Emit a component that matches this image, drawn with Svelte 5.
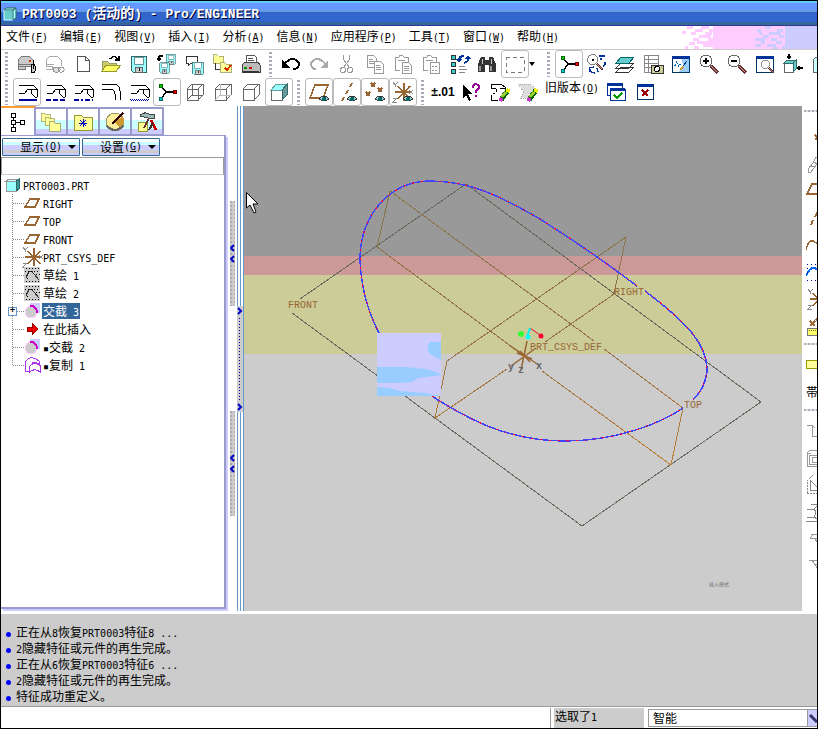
<script lang="ts">
  const menus = [
    ['文件', 'F'], ['编辑', 'E'], ['视图', 'V'], ['插入', 'I'], ['分析', 'A'],
    ['信息', 'N'], ['应用程序', 'P'], ['工具', 'T'], ['窗口', 'W'], ['帮助', 'H'],
  ]

  const edge = '<path d="M4 5H15M4 13H10L13 9H22M15 5Q19 5 22 9V17M16 9V13L20 17H22" fill="none" stroke="#000"/>'
  const cube = '<path d="M4 9H15V20H4ZM4 9L9 4H20V15L15 20M15 9L20 4" fill="none" stroke="#666"/>'
  const eye = '<path d="M12 19Q17 13 22 19Q17 23 12 19Z" fill="#9cc" stroke="#333"/><circle cx="17" cy="19" r="2" fill="#066"/>'
  const disk = '<path d="M4 4H19V20H6L4 18Z" fill="#9ff" stroke="#366"/><path d="M7 5H16V12H7Z" fill="#fff" stroke="#699"/><path d="M8 15H15V20H8Z" fill="#ccc" stroke="#666"/><path d="M12 16V19" stroke="#000"/>'
  const nodes = '<path d="M6 6L11 12L6 19M11 12H20" fill="none" stroke="#000" stroke-width="1.500"/><circle cx="6" cy="6" r="2" fill="#0c0" stroke="#060"/><circle cx="6" cy="19" r="2" fill="#0cc" stroke="#066"/><circle cx="20" cy="12" r="2" fill="#e00" stroke="#600"/>'
  const lens = '<circle cx="9" cy="9" r="6" fill="#fff" stroke="#666"/><path d="M14 14L21 21" stroke="#633" stroke-width="3"/><path d="M14 14L20 20" stroke="#c99"/>'
  const win = '<rect x="3" y="4" width="17" height="16" fill="#fff" stroke="#036"/><path d="M3 5H21" stroke="#039" stroke-width="3"/>'
  const plane = '<path d="M8 5H21L16 18H3Z" fill="none" stroke="#963" stroke-width="1.500"/>'
  const axis = '<path d="M17 3L15 7M13 10L11 14M9 17L7 21" fill="none" stroke="#963" stroke-width="2"/>'
  const csys = '<path d="M7 6L19 19M7 19L19 6M4 12H20M13 3V21" fill="none" stroke="#963" stroke-width="1.500"/><path d="M2 2L4 5L7 2M4 5V7M2 18H6L2 22H6M18 10L22 14M22 10L18 14" fill="none" stroke="#888"/>'
  const paste = '<path d="M4 5H8Q10 1 13 5H17V10M9 18H4V5M7 8H14" fill="none" stroke="#999"/>'
  const folder = '<path d="M3 6H8L10 8H17V18H3Z" fill="#ff9" stroke="#996"/>'
  const pencil = '<path d="M14 20L21 10" stroke="#060" stroke-width="5"/><path d="M15 17L19 12" stroke="#9c3" stroke-width="3"/><path d="M20 12L22 9" stroke="#ee0" stroke-width="4"/><path d="M13 21L15 18" stroke="#c3c" stroke-width="4"/>'

  const icons: Record<string, string> = {
    find: '<path d="M3 14V8L7 4H14L18 8V14ZM3 12H18M10 14V17H3V14" fill="#ccc" stroke="#777"/><circle cx="15" cy="9" r="1.5" fill="#c30"/><rect x="16" y="12" width="4" height="9" rx="2" fill="#ccc" stroke="#000"/><path d="M18 8V17" stroke="#000"/>',
    link: '<path d="M3 14V8L7 4H14L18 8V14M3 14H10M3 12H11M3 17H9V14" fill="none" stroke="#aaa"/><rect x="10" y="15" width="7" height="5" rx="2" fill="#ddd" stroke="#999"/><rect x="15" y="15" width="6" height="5" rx="2" fill="none" stroke="#999"/>',
    new: '<path d="M6 4H14L18 8V19H6ZM14 4V8H18" fill="#fff" stroke="#555"/>',
    open: '<path d="M3 9H8L10 11H17V19H3Z" fill="#cc6" stroke="#996"/><path d="M3 19L7 13H22L17 19Z" fill="#ff6" stroke="#993"/><path d="M11 7Q15 2 19 7M20 4V8H16" fill="none" stroke="#000" stroke-width="1.500"/>',
    save: disk,
    saveas: `<g transform="translate(9 0) scale(.6)">${disk}</g><g transform="translate(2 8) scale(.65)">${disk}</g><path d="M2 7H6M4 4V9M4 4H8" fill="none" stroke="#000" stroke-width="1.500"/>`,
    backup: `<path d="M3 4H14V11H8L5 14V11H3Z" fill="#fff" stroke="#333"/><g transform="translate(6 7) scale(.75)">${disk}</g>`,
    workdir: `<g transform="translate(0 -2) scale(.75)">${folder}</g><path d="M4 11V17H9" fill="none" stroke="#333"/><g transform="translate(7 6) scale(.8)">${folder}</g><path d="M14 16L16 18L20 13" fill="none" stroke="#c30" stroke-width="2"/>`,
    print: '<path d="M7 11V3H15L17 5V11M9 6H14M9 8H15" fill="#fff" stroke="#555"/><path d="M3 13L6 10H19L21 13V20H3Z" fill="#bbb" stroke="#444"/><path d="M5 16H8" stroke="#090" stroke-width="2"/><path d="M10 16H13" stroke="#c00" stroke-width="2"/><path d="M4 20H20" stroke="#333" stroke-width="2"/>',
    undo: '<path d="M5 13Q9 7 14 7Q20 8 20 13Q19 17 14 17" fill="none" stroke="#000" stroke-width="2"/><path d="M3 8V16H11Z" fill="#000"/>',
    redo: '<path d="M19 13Q15 7 10 7Q4 8 4 13Q5 17 9 17" fill="none" stroke="#aaa" stroke-width="2"/><path d="M21 8V16H13Z" fill="#aaa"/>',
    cut: '<path d="M8 3L9 8L14 15M15 3L14 8L9 15" fill="none" stroke="#999"/><circle cx="8" cy="18" r="2.500" fill="none" stroke="#999"/><circle cx="15" cy="18" r="2.500" fill="none" stroke="#999"/>',
    copy: '<path d="M4 3H10L13 6V15H4ZM6 7H10M6 9H11M6 11H11" fill="#fff" stroke="#999"/><path d="M11 9H17L20 12V21H11ZM13 13H17M13 15H18M13 17H18" fill="#fff" stroke="#999"/>',
    paste: `${paste}<path d="M11 10H17L20 13V21H11ZM13 14H18M13 16H18M13 18H18" fill="#fff" stroke="#999"/>`,
    pastex: `${paste}<path d="M11 10H20V21H11ZM13 14H15M16 14H18M13 18H15M16 18H18" fill="#fff" stroke="#999"/>`,
    regen: '<path d="M4 3H8V7H4ZM4 10H8V14H4ZM4 17H8V21H4Z" fill="#3cc" stroke="#333"/><path d="M12 14H18M12 17H20M12 20H18" stroke="#888"/><path d="M12 9Q12 4 17 4M21 5Q22 10 17 11" fill="none" stroke="#039" stroke-width="2"/><path d="M9 7H15L12 11ZM18 7L21 3L24 7Z" fill="#039"/>',
    search: '<path d="M6 5H10V8H14V5H18L21 12V20H14V13H10V20H3V12Z" fill="#333"/><path d="M7 7V12M16 7V12" stroke="#ccc"/><path d="M5 14V19M16 14V19" stroke="#999" stroke-width="2"/>',
    select: '<path d="M3 5H21V20H3Z" fill="none" stroke="#777" stroke-dasharray="4 3"/>',
    nodes,
    spin: `<g transform="translate(0 0) scale(.85)">${lens}</g><circle cx="8" cy="8" r="1.500" fill="#000"/><path d="M14 4H20M15 7H17M20 10Q21 13 18 14M5 17V19Q7 21 10 21M4 16L9 15M12 16L13 20" fill="none" stroke="#039" stroke-width="1.500"/>`,
    layers: '<path d="M3 20L8 15H21L16 20ZM3 16L8 11H21L16 16Z" fill="#fff" stroke="#333"/><path d="M3 11L8 5H21L16 11Z" fill="#6cc" stroke="#066"/>',
    views: '<path d="M3 3H17V20H3ZM3 7H17M3 11H17M3 15H17M7 3V20" fill="#fff" stroke="#888"/><rect x="10" y="13" width="12" height="8" fill="#cc9" stroke="#333"/><circle cx="16" cy="17" r="2.500" fill="#fff" stroke="#000"/>',
    repaint: `${win}<path d="M13 7H20V20H10L14 14Z" fill="#9cf"/><path d="M7 10L9 11M9 14L12 12M6 13L7 14" stroke="#06c" stroke-width="1.500" stroke-dasharray="1 1"/><path d="M18 9L14 14" stroke="#036"/><path d="M14 15L11 18" stroke="#c93" stroke-width="2"/>`,
    zoomin: `${lens}<path d="M6 9H12M9 6V12" stroke="#000" stroke-width="2"/>`,
    zoomout: `${lens}<path d="M6 9H12" stroke="#000" stroke-width="2"/>`,
    refit: `${win}<g transform="translate(6 6) scale(.7)">${lens}</g>`,
    orient: '<path d="M3 11H12V20H3Z" fill="#fff" stroke="#666"/><path d="M3 11L6 8H15L12 11ZM12 11L15 8V17L12 20Z" fill="#6cc" stroke="#366"/><path d="M8 2V7M6 5H10M22 16H16M18 14V18" stroke="#000" stroke-width="1.500"/>',
    saved: '<path d="M4 8L7 5H20V20H4Z" fill="#cff" stroke="#666"/>',
    edge1: `${edge}<path d="M4 20H22" stroke="#009" stroke-width="2"/>`,
    edge2: `${edge}<path d="M3 20H22" stroke="#009" stroke-width="2" stroke-dasharray="5 2"/>`,
    edge3: `${edge}<path d="M3 20H22" stroke="#009" stroke-width="2" stroke-dasharray="5 2 2 2"/>`,
    edge4: '<path d="M3 4H15Q21 5 21 11V20M3 9H12Q16 10 16 14V20" fill="none" stroke="#000"/>',
    edge5: `${edge}<path d="M3 19H22M4 20H22" stroke="#009" stroke-dasharray="1 1"/>`,
    wire: `${cube}<path d="M9 4V15H20M9 15L4 20" fill="none" stroke="#666"/>`,
    hidden: `${cube}<path d="M9 4V15H20M9 15L4 20" fill="none" stroke="#bbb"/>`,
    nohidden: cube,
    shaded: '<path d="M4 10H15V20H4Z" fill="#fff" stroke="#666"/><path d="M4 10L9 4H20L15 10Z" fill="#9ff" stroke="#699"/><path d="M15 10L20 4V15L15 20Z" fill="#699" stroke="#366"/>',
    planes: plane + eye,
    axes: axis + eye,
    points: `<path d="M8 3L12 7M12 3L8 7M3 12L7 16M7 12L3 16M15 8L19 12M19 8L15 12" stroke="#963" stroke-width="1.500"/>${eye}`,
    csyss: csys + eye,
    csystem: csys,
    help: '<path d="M4 5V18L7 15L10 21L12 20L9 14H13Z" fill="#000"/><path d="M14 8Q14 4 17 4Q21 5 20 8L17 11V13M17 15V17" fill="none" stroke="#909" stroke-width="2"/>',
    sketch: `<path d="M4 4H14L19 8M4 4V8L9 9V12M19 8H13M4 15V20H11M8 14L6 13" fill="#fff" stroke="#000"/>${pencil}`,
    fade: `<path d="M3 4H16L20 9L15 18H6L9 12Z" fill="#ddd" stroke="#aaa" stroke-dasharray="1 1"/>${pencil}`,
    accept: '<path d="M2 3H17V15H2Z" fill="#fff" stroke="#039"/><path d="M2 4H17" stroke="#039" stroke-width="3"/><path d="M5 9H20V20H5Z" fill="#fff" stroke="#039"/><path d="M5 9H20" stroke="#039" stroke-width="3"/><path d="M9 15L12 18L17 13" fill="none" stroke="#090" stroke-width="2"/>',
    close: '<path d="M4 4H20V19H4Z" fill="#fff" stroke="#036"/><path d="M4 5H20" stroke="#039" stroke-width="3"/><path d="M9 10L15 16M15 10L9 16" stroke="#900" stroke-width="2"/>',
    // model tree tabs
    tree: '<path d="M5 3H9V7H5ZM5 10H9V14H5ZM5 17H9V21H5ZM14 10H18V14H14ZM7 7V10M7 14V17M9 12H14" fill="#fff" stroke="#000"/>',
    folders: `<g transform="translate(0 -1) scale(.7)">${folder}</g><g transform="translate(4 3) scale(.7)">${folder}</g><g transform="translate(8 7) scale(.8)">${folder}</g>`,
    favorites: '<path d="M3 5H10L12 7H21V20H3Z" fill="#ff9" stroke="#993"/><path d="M12 9V17M8 13H16M9 10L15 16M15 10L9 16" stroke="#00c"/>',
    history: '<circle cx="12" cy="12" r="9" fill="#fe9" stroke="#996"/><path d="M12 12L20 6Q23 12 18 19Z" fill="#c93"/><path d="M9 14L20 3" stroke="#300" stroke-width="2"/><path d="M4 16Q12 24 20 16" fill="none" stroke="#666" stroke-width="2"/>',
    tools: '<path d="M3 12H12V21H3Z" fill="#ff9" stroke="#993"/><path d="M5 6Q8 1 14 4H19V8H13L9 7Z" fill="#9bb" stroke="#444"/><path d="M14 8L9 18" stroke="#633" stroke-width="2"/><path d="M16 10L21 20" stroke="#c00" stroke-width="3"/><path d="M14 20L18 13" stroke="#333" stroke-width="2"/>',
    // feature palette, cut by the window edge
    dpoint: '<path d="M9 10L14 15M14 10L9 15" stroke="#963" stroke-width="2"/>',
    chain: '<path d="M2 17L8 10L11 12L5 20L2 20ZM7 11L10 5L13 5V11M5 14L9 15" fill="none" stroke="#999"/>',
    dplane: '<path d="M6 5H20L15 15H1Z" fill="none" stroke="#963" stroke-width="1.500"/>',
    daxis: '<path d="M12 5L9 11M7 14L5 19" stroke="#963" stroke-width="2"/>',
    curve: '<path d="M0 17Q2 7 7 8Q11 10 14 13" fill="none" stroke="#963" stroke-width="1.500"/>',
    dsketch: '<path d="M0 16Q3 8 8 8Q12 9 14 12" fill="none" stroke="#06f" stroke-width="2"/><path d="M1 4H20M1 8H3M1 12H3M1 20H20" stroke="#009" stroke-dasharray="1 3"/>',
    field: '<path d="M4 7L9 12M9 7L4 12M10 5L12 7" stroke="#963" stroke-width="2"/><path d="M1 14H20V21H1Z" fill="#ff6" stroke="#777"/><path d="M3 16H12" stroke="#663" stroke-dasharray="1 1"/>',
    rect: '<path d="M0 7H20V15H0Z" fill="#ff9" stroke="#990"/>',
    hole: '<path d="M1 6H6V17H14M6 6L9 9" fill="none" stroke="#999"/>',
    shell: '<path d="M1 7L4 4H20M1 7V20H20M1 7H5M3 9H20M3 9V18H20M6 11V16H20M6 11H14" fill="none" stroke="#999"/>',
    rib: '<path d="M1 20V8L7 2M1 20H20" fill="none" stroke="#888" stroke-dasharray="2 1"/><path d="M4 7V17H14Z" fill="none" stroke="#888"/>',
    draft: '<path d="M5 4H20M1 9H8Q11 12 8 17H1M8 9L12 5M8 17L12 20M0 21H20" fill="none" stroke="#888"/>',
    round: '<path d="M5 7H14M4 11L8 7M4 11L14 12M9 12L12 16" fill="none" stroke="#999"/>',
    chamfer: '<path d="M3 6H14M6 6L12 15M9 10H14" fill="none" stroke="#999"/>',
    // tree items
    part: '<path d="M5 8H15V18H5Z" fill="#9ff" stroke="#999"/><path d="M5 8L8 6H18L15 8Z" fill="#cff" stroke="#999"/><path d="M15 8L18 6V16L15 18Z" fill="#399" stroke="#366"/>',
    datum: '<path d="M9 8H18L14 16H4Z" fill="none" stroke="#963" stroke-width="1.500"/>',
    sk: '<rect x="3" y="4" width="16" height="16" fill="#ccc"/><path d="M5 15Q9 4 13 11L18 17" fill="none" stroke="#333"/><path d="M5 5H19M5 18H19M4 8H19M5 12H8M15 11H19M6 15H8" stroke="#000" stroke-dasharray="1 2"/>',
    trim: '<rect x="9" y="4" width="10" height="10" fill="#ccf"/><circle cx="10" cy="13" r="6" fill="#ccc" stroke="#fcf"/><path d="M9 7Q16 7 16 14" fill="none" stroke="#c0c" stroke-width="2"/>',
    insert: '<path d="M6 10H11V6L17 12L11 18V14H6Z" fill="#e00" stroke="#900"/>',
    dup: '<path d="M4 18V9Q10 1 18 8V12Q12 8 8 14V20Q13 14 19 19V12Q15 8 11 10M4 18H8" fill="none" stroke="#a3e"/>',
  }

  const row1 = [
    ['find', 'link', 'new', 'open', 'save', 'saveas', 'backup', 'workdir', 'print'],
    ['undo', 'redo', 'cut', 'copy', 'paste', 'pastex', 'regen', 'search', 'select'],
    ['nodes', 'spin', 'layers', 'views', 'repaint', 'zoomin', 'zoomout', 'refit', 'orient', 'saved'],
  ]
  const row2 = [
    ['edge1', 'edge2', 'edge3', 'edge4', 'edge5', 'nodes', 'wire', 'hidden', 'nohidden', 'shaded'],
    ['planes', 'axes', 'points', 'csyss'],
  ]
  const pressed = ['edge1', 'nodes', 'shaded', 'planes', 'axes', 'points', 'csyss', 'select']

  const palette = [
    ['dpoint', 'chain', 'dplane', 'daxis', 'curve', 'dsketch', 'csystem', 'field'],
    ['rect', 'band'],
    ['hole', 'shell', 'rib', 'draft', 'round', 'chamfer'],
  ]

  const features = [
    { icon: 'datum', name: 'RIGHT' },
    { icon: 'datum', name: 'TOP' },
    { icon: 'datum', name: 'FRONT' },
    { icon: 'csystem', name: 'PRT_CSYS_DEF' },
    { icon: 'sk', name: '草绘 1' },
    { icon: 'sk', name: '草绘 2' },
    { icon: 'trim', name: '交截 3', open: true },
    { icon: 'insert', name: '在此插入' },
    { icon: 'trim', name: '▪交截 2' },
    { icon: 'dup', name: '▪复制 1' },
  ]

  const loop = 'M432 396C445 405 460 413 472 419C502 434 535 441 565 441C615 441 660 424 683 408M693 400C703 390 707 378 707 368C706 345 690 325 645 291M637 286C600 258 570 238 540 219C500 196 470 181 430 181C390 181 360 215 360 260C361 285 367 310 379 333'

  let selected = $state(6)
  let tab = $state('tree')
  let filter = $state('')

  const messages = [
    '正在从8恢复PRT0003特征8 ...',
    '2隐藏特征或元件的再生完成。',
    '正在从6恢复PRT0003特征6 ...',
    '2隐藏特征或元件的再生完成。',
    '特征成功重定义。',
  ]

  // scattered blocks at the right of the menu bar
  const pink = [
    [8, 0, 6], [3, 5, 4], [16, 3, 8], [12, 6, 5], [22, 0, 8], [20, 9, 12], [14, 12, 6], [26, 6, 7],
    [10, 16, 6], [18, 15, 9], [29, 12, 6], [24, 18, 10], [15, 20, 5], [30, 3, 6], [27, 15, 8], [34, 21, 4], [6, 20, 3],
  ]
  const blue = [
    [86, 0, 6], [78, 3, 4], [90, 6, 12], [84, 9, 6], [76, 12, 10], [92, 12, 6], [82, 15, 4], [76, 18, 6],
    [88, 18, 9], [98, 3, 6], [97, 15, 6], [100, 9, 5], [80, 6, 3], [103, 20, 4], [94, 21, 5],
  ]

  // latin runs are set smaller than the CJK ones
  function runs(text: string) {
    return text.match(/[\x00-\x7f▪]+|[^\x00-\x7f▪]+/g) ?? []
  }
</script>

{#snippet mix(text: string)}{#each runs(text) as run}<span class:latin={/[\x00-\x7f▪]/.test(run)}>{run}</span>{/each}{/snippet}

{#snippet key(label: string, k: string)}{label}<span class="latin">(<u>{k}</u>)</span>{/snippet}

{#snippet icon(name: string)}
  <svg class="icon" viewBox="0 0 24 24" aria-hidden="true">{@html icons[name]}</svg>
{/snippet}

{#snippet tool(name: string)}
  <button class="tool" class:pressed={pressed.includes(name)} aria-label={name}>{@render icon(name)}</button>
{/snippet}

<div class="window">
  <header class="title">
    <svg viewBox="0 0 14 14" aria-hidden="true">
      <path d="M1 3H10V13H1Z" fill="#6cc" stroke="#cff" />
      <path d="M1 3L3 1H13L10 3ZM10 3L13 1V11L10 13Z" fill="#9ff" stroke="#366" />
    </svg>
    <h1>{@render mix('PRT0003 (活动的) - Pro/ENGINEER')}</h1>
  </header>

  <nav class="menu">
    {#each menus as [label, k]}
      <button>{@render key(label, k)}</button>
    {/each}
    <svg class="noise" viewBox="0 0 138 23" aria-hidden="true">
      <rect x="34" width="76" height="23" fill="#fcf" />
      <rect x="106" width="32" height="23" fill="#ccf" />
      {#each pink as [x, y, w]}<rect {x} {y} width={w} height="3" fill="#fcf" />{/each}
      {#each blue as [x, y, w]}<rect {x} {y} width={w} height="3" fill="#ccf" />{/each}
    </svg>
  </nav>

  <div class="bar">
    {#each row1 as group, i}
      <span class="grip"></span>
      {#each group as name}{@render tool(name)}{/each}
      {#if i === 1}<button class="drop" aria-label="select list"><i class="caret"></i></button>{/if}
    {/each}
  </div>
  <div class="bar">
    {#each row2 as group}
      <span class="grip"></span>
      {#each group as name}{@render tool(name)}{/each}
    {/each}
    <span class="grip"></span>
    <button class="tool tol">±.01</button>
    {@render tool('help')}
    {@render tool('sketch')}
    {@render tool('fade')}
    <button class="old">{@render key('旧版本', 'O')}</button>
    {@render tool('accept')}
    {@render tool('close')}
  </div>

  <main>
    <aside>
      <div class="tabs">
        {#each ['tree', 'folders', 'favorites', 'history', 'tools'] as t}
          <button class:active={tab === t} aria-label={t} onclick={() => (tab = t)}>{@render icon(t)}</button>
        {/each}
      </div>
      <div class="panel">
        <div class="actions">
          <button>{@render key('显示', 'O')}<i class="caret"></i></button>
          <button>{@render key('设置', 'G')}<i class="caret"></i></button>
        </div>
        <input class="filter" aria-label="filter" bind:value={filter} />
        <div class="root">{@render icon('part')}<span class="name">{@render mix('PRT0003.PRT')}</span></div>
        <ul>
          {#each features as f, i}
            <li>
              <span class="branch">
                <svg viewBox="0 0 23 18" aria-hidden="true">
                  <path d="M11.500 0V{i === features.length - 1 ? 9 : 18}M12 9.500H23" />
                </svg>
                {#if f.open}<button class="expand" aria-label="expand">+</button>{/if}
              </span>
              {@render icon(f.icon)}
              <button class="name" class:selected={selected === i} onclick={() => (selected = i)}>{@render mix(f.name)}</button>
            </li>
          {/each}
        </ul>
      </div>
    </aside>

    <div class="sash">
      <div class="strips">
        <svg class="strip" viewBox="0 0 5 105" aria-hidden="true"><path class="chev" d="M4 44L1 47L4 50M4 55L1 58L4 61" /></svg>
        <svg class="strip" viewBox="0 0 5 105" aria-hidden="true"><path class="chev" d="M4 44L1 47L4 50M4 55L1 58L4 61" /></svg>
      </div>
      <div class="rails">
        <svg class="knob" viewBox="0 0 6 106" aria-hidden="true">
          <path d="M2.500 12V94" stroke="#009" stroke-dasharray="1 2" />
          <path class="chev" d="M1 2L4 5L1 8M1 98L4 101L1 104" />
        </svg>
      </div>
    </div>

    <section class="canvas">
      <svg viewBox="244 106 558 505">
        <defs>
          <linearGradient id="tint" gradientUnits="userSpaceOnUse" x1="0" y1="190" x2="0" y2="460">
            <stop offset="0" stop-color="#857746" />
            <stop offset=".5" stop-color="#93704c" />
            <stop offset="1" stop-color="#bd7e36" />
          </linearGradient>
        </defs>
        <g class="wires">
          <path d="M300 299L466 184L761 402L582 526L292 313" stroke="#68685c" />
          <path d="M594 341L390 191L377 247L524 356M542 371L671 465L683 408L604 349" stroke="url(#tint)" />
          <path d="M545 342L614 294L626 237L447 361L435 418L507 369" stroke="url(#tint)" />
          <path d={loop} stroke="#44f" stroke-width="1.500" />
          <path class="dash" d={loop} />
        </g>
        <rect x="377" y="333" width="64" height="63" fill="#ccf" />
        <path d="M430 342H441V360L435 357L428 352V345ZM377 367H405L425 369L433 371L441 374V375L418 378L412 382L400 383H377ZM377 387L390 388L400 391L425 393L441 396H377Z" fill="#9cf" />
        <path d="M509 345L540 366M511 366L536 348M527 341L521 370M517 353L532 359M520 351L530 362" stroke="#963" stroke-width="1.500" />
        <path d="M530 328L540 335" stroke="#e03" />
        <path d="M530 328L527 337" stroke="#0ee" stroke-width="2" />
        <circle cx="521" cy="334" r="3" fill="#3f3" />
        <circle cx="528" cy="337" r="2.500" fill="#0ff" />
        <circle cx="541" cy="336" r="2.500" fill="#f03" />
        <text x="288" y="308">FRONT</text>
        <text x="614" y="295">RIGHT</text>
        <text x="684" y="408">TOP</text>
        <text x="530" y="350">PRT_CSYS_DEF</text>
        <text class="ax" x="508" y="370">y</text>
        <text class="ax" x="518" y="373">z</text>
        <text class="ax" x="536" y="369">x</text>
        <text class="mode" x="709" y="586">插入模式</text>
        <path d="M246.500 192.500V208L250 205L254 213L256 212L253 204H258Z" fill="#fff" stroke="#000" />
      </svg>
    </section>

    <div class="palette">
      {#each palette as group}
        <span class="hgrip"></span>
        {#each group as name}
          <button aria-label={name}>
            {#if name === 'band'}<span>帯</span>{:else}{@render icon(name)}{/if}
          </button>
        {/each}
      {/each}
    </div>
  </main>

  <ul class="log">
    {#each messages as m}
      <li>{@render mix(m)}</li>
    {/each}
  </ul>

  <footer>
    <span class="count">{@render mix('选取了1')}</span>
    <label class="pick">
      <select aria-label="selection filter"><option>智能</option></select>
      <svg viewBox="0 0 9 16" aria-hidden="true"><path d="M0 0H9V16H0Z" fill="#ccf" /><path d="M2 5L9 12" stroke="#336" stroke-width="3" /></svg>
    </label>
  </footer>
</div>

<style>
  :global(body) { background: #fff; }
  .window {
    box-sizing: border-box;
    min-height: 100vh;
    display: flex;
    flex-direction: column;
    border: 1px solid #000;
    overflow: hidden;
    font: 12px/16px 'Noto Sans CJK SC', sans-serif;
    color: #000;
  }
  .latin { font-family: 'DejaVu Sans Mono', monospace; font-size: 10px; }
  button {
    margin: 0; padding: 0; border: 0;
    background: none; color: inherit; font: inherit;
    white-space: pre;
  }
  ul { list-style: none; margin: 0; padding: 0; }
  .icon {
    width: 24px; height: 24px;
    flex-shrink: 0;
    display: block;
    shape-rendering: crispEdges;
  }

  .title {
    display: flex;
    align-items: center;
    gap: 5px;
    height: 25px;
    padding-left: 2px;
    background: linear-gradient(#6cf 0 2px, #69f 2px 10px, #69c 10px 11px, #36c 11px 21px, #369 21px 24px, #339 24px);
  }
  .title svg { width: 14px; height: 14px; }
  .title h1 {
    margin: 0;
    color: #fff;
    font-size: 14px;
    line-height: 20px;
    white-space: pre;
    text-shadow: 1px 1px #003;
  }
  .title .latin { font-family: 'Liberation Mono', monospace; font-size: 13px; }

  .menu {
    display: flex;
    align-items: center;
    gap: 12px;
    height: 23px;
    padding-left: 5px;
    border-bottom: 1px solid #ccc;
  }
  .menu button { height: 20px; line-height: 16px; padding-bottom: 4px; }
  .noise { width: 138px; height: 23px; margin-left: auto; }

  /* Toolbars */
  .bar { display: flex; align-items: center; height: 28px; overflow: hidden; }
  .grip {
    flex: none;
    width: 3px; height: 25px;
    margin: 0 5px 0 4px;
    background: repeating-linear-gradient(#aab 0 2px, #fff 2px 4px);
  }
  .tool {
    box-sizing: border-box;
    flex: none;
    width: 28px; height: 28px;
    display: flex;
    align-items: center;
    justify-content: center;
    border: 1px solid transparent;
  }
  .pressed { border-color: #bbb; border-radius: 3px; }
  .tol { font: bold 12px/16px 'Liberation Sans', sans-serif; }
  .old { padding: 0 4px 8px; }
  .caret {
    display: inline-block;
    border: 3px solid transparent;
    border-top: 4px solid #000;
    border-bottom: 0;
  }
  .drop { width: 20px; padding: 0 8px 6px 0; }

  main { flex: 1; display: flex; }
  aside { width: 227px; flex: none; display: flex; flex-direction: column; }

  .tabs { display: flex; height: 29px; }
  .tabs button {
    box-sizing: border-box;
    width: 32px;
    margin-top: 1px;
    display: flex; align-items: center; justify-content: center;
    border: 2px solid #99c;
    border-left: 0;
    border-bottom: 1px solid #99c;
    background: linear-gradient(#fff 0 11px, #cff 11px 20px, #ccf 20px);
  }
  .tabs .active {
    width: 35px;
    margin-top: 0;
    border-top: 2px solid #f93;
    border-bottom: 0;
    background: #fff;
  }
  .panel {
    flex: 1;
    margin: 0 2px 2px 0;
    border: 1px solid #99c;
    border-width: 1px 2px 2px 0;
    box-shadow: 2px 2px #ccf;
    padding-top: 2px;
  }
  .actions { display: flex; gap: 2px; padding-left: 1px; }
  .actions button {
    box-sizing: border-box;
    width: 78px; height: 18px;
    display: flex; align-items: center;
    padding-left: 17px;
    border: 1px solid #369;
    border-radius: 1px;
    line-height: 16px;
    background: linear-gradient(#fff 0 3px, #cff 3px 6px, #ccf 6px 11px, #ccc 11px 14px, #ccf 14px);
  }
  .actions .caret { border-width: 4px 4px 0; margin-left: 6px; }
  .filter {
    box-sizing: border-box;
    display: block;
    width: 100%; height: 18px;
    margin-top: 1px;
    border: 1px solid #999;
    border-bottom-color: #ccc;
    outline: 0;
    font: inherit;
  }

  .root { display: flex; align-items: center; height: 18px; margin-top: 1px; padding-left: 3px; }
  .panel li { display: flex; align-items: center; height: 18px; }
  .root .icon, .panel li .icon { margin: 0 -3px; }
  .branch { position: relative; width: 23px; height: 18px; }
  .branch path { fill: none; stroke: #888; stroke-dasharray: 1 1; }
  .expand {
    position: absolute;
    left: 7px; top: 5px;
    box-sizing: border-box;
    width: 9px; height: 9px;
    border: 1px solid #69c;
    background: #fff;
    font: bold 9px/7px 'Liberation Mono', monospace;
  }
  .name { height: 16px; line-height: 16px; padding: 0 1px; white-space: pre; }
  .selected { background: #369; color: #fff; }

  .sash { width: 16px; flex: none; display: flex; }
  .strips {
    width: 9px;
    display: flex; flex-direction: column; align-items: center; justify-content: center;
    gap: 105px;
  }
  .strip {
    width: 5px; height: 105px;
    background: repeating-conic-gradient(#ccc 0 75%, #aaa 0 100%) 0 0 / 4px 4px;
  }
  .chev { fill: none; stroke: #00c; stroke-width: 2; }
  .rails {
    flex: 1;
    display: flex; align-items: center;
    border-right: 1px solid #69c;
    background: linear-gradient(90deg, #69c 0 1px, #fff 1px 3px, #69c 3px 4px, #fff 4px);
  }
  .knob { width: 6px; height: 106px; background: #ccc; }

  .canvas {
    flex: 1;
    min-width: 0;
    display: flex;
    background: linear-gradient(#999 0 150px, #c99 150px 169px, #cc9 169px 248px, #ccc 248px);
  }
  .canvas svg { flex: 1; width: 100%; min-height: 100%; }
  .canvas text { font: 10px 'Liberation Mono', monospace; fill: #963; }
  .canvas .ax { font-weight: bold; fill: #666; }
  .canvas .mode { font: 5px 'Noto Sans CJK SC', sans-serif; fill: #777; }
  .wires { fill: none; shape-rendering: crispEdges; }
  .dash { stroke: #f03; stroke-dasharray: 2 7; }

  .palette { width: 13px; flex: none; padding-left: 2px; overflow: hidden; }
  .palette button { display: flex; align-items: center; width: 28px; height: 27px; padding-left: 2px; }
  .hgrip {
    display: block;
    height: 2px;
    margin: 4px 0 6px;
    background: repeating-linear-gradient(90deg, #aab 0 2px, #ddd 2px 4px);
  }
  .hgrip:first-child { margin-bottom: 11px; }

  .log {
    margin-top: 3px;
    padding: 10px 0 2px 5px;
    background: #ccc;
    border-bottom: 1px solid #999;
  }
  .log li { display: flex; align-items: baseline; height: 16px; white-space: pre; }
  .log li::before {
    content: '';
    width: 5px; height: 5px;
    margin: 0 5px 2px 0;
    border-radius: 50%;
    background: #00f;
  }

  footer { display: flex; height: 21px; justify-content: flex-end; }
  .count {
    width: 89px;
    margin: 1px 4px 0 0;
    padding-left: 1px;
    background: #ccc;
    box-shadow: -3px 0 #fff, -4px 0 #999;
  }
  .pick {
    width: 169px;
    display: flex;
    margin: 2px 0 1px;
    border: 1px solid #999;
    border-right: 0;
    box-sizing: border-box;
  }
  .pick select {
    flex: 1;
    appearance: none;
    border: 0;
    padding: 0 4px;
    background: #fff;
    font: inherit;
    line-height: 16px;
  }
  .pick svg { width: 9px; border-left: 1px solid #999; }
</style>
